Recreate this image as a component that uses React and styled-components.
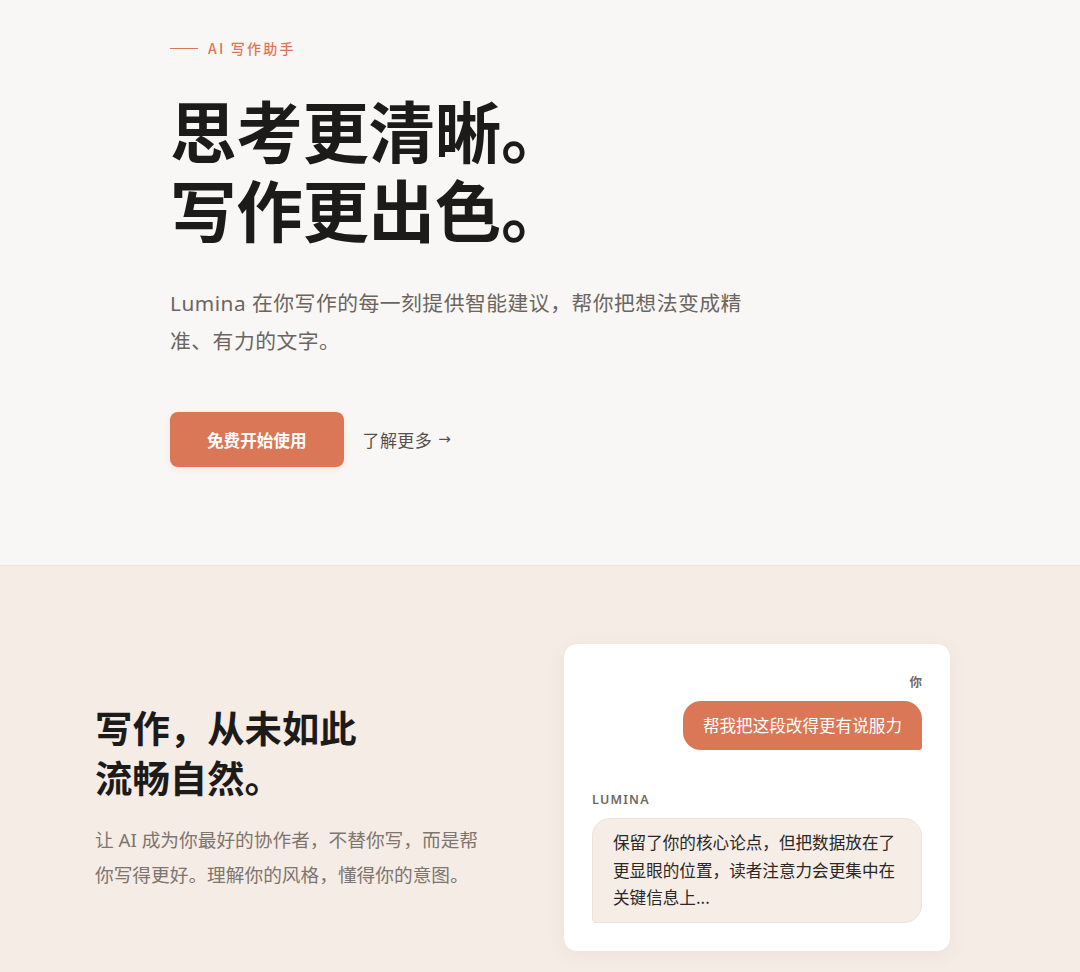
import styled, { createGlobalStyle } from "styled-components";

const GlobalStyle = createGlobalStyle`
  * { box-sizing: border-box; }
  body {
    margin: 0;
    background: #f9f7f5;
    font-family: "Noto Sans", "Noto Sans CJK SC", sans-serif;
    color: #1c1b1a;
  }
`;

export default function App() {
  return (
    <>
      <GlobalStyle />
      <Hero>
        <HeroInner>
          <Eyebrow>
            <EyebrowLine />
            AI 写作助手
          </Eyebrow>
          <Headline>
            思考更清晰。
            <br />
            写作更出色。
          </Headline>
          <Lead>
            Lumina 在你写作的每一刻提供智能建议，帮你把想法变成精准、有力的文字。
          </Lead>
          <Actions>
            <PrimaryButton>免费开始使用</PrimaryButton>
            <LinkButton>
              了解更多 <Arrow>→</Arrow>
            </LinkButton>
          </Actions>
        </HeroInner>
      </Hero>
      <Feature>
        <FeatureInner>
          <FeatureText>
            <FeatureTitle>
              写作，从未如此
              <br />
              流畅自然。
            </FeatureTitle>
            <FeatureBody>
              让 AI 成为你最好的协作者，不替你写，而是帮你写得更好。理解你的风格，懂得你的意图。
            </FeatureBody>
          </FeatureText>
          <ChatCard>
            <Speaker $align="right">你</Speaker>
            <Bubble $from="user">帮我把这段改得更有说服力</Bubble>
            <Speaker $caps>LUMINA</Speaker>
            <Bubble $from="ai">
              保留了你的核心论点，但把数据放在了更显眼的位置，读者注意力会更集中在关键信息上...
            </Bubble>
          </ChatCard>
        </FeatureInner>
      </Feature>
    </>
  );
}

const Hero = styled.section`
  background: #f9f7f5;
  border-bottom: 1px solid #efe6df;
  padding: 38px 0 98px;
`;

const HeroInner = styled.div`
  width: 740px;
  margin: 0 auto;
`;

const Eyebrow = styled.div`
  display: flex;
  align-items: center;
  gap: 10px;
  height: 20px;
  font-family: "Noto Sans CJK SC", sans-serif;
  font-size: 14px;
  font-weight: 500;
  letter-spacing: 2.2px;
  color: #d97757;
`;

const EyebrowLine = styled.span`
  display: block;
  width: 28px;
  height: 1px;
  background: #d97757;
`;

const Headline = styled.h1`
  margin: 32px 0 0;
  font-family: "Noto Sans CJK SC", sans-serif;
  font-size: 66.5px;
  font-weight: 700;
  line-height: 79px;
  letter-spacing: -0.3px;
  color: #1c1b1a;
`;

const Lead = styled.p`
  margin: 36px 0 0;
  max-width: 590px;
  font-family: "Noto Sans", "Noto Sans CJK SC", sans-serif;
  font-size: 20.8px;
  letter-spacing: 0.5px;
  line-height: 38px;
  color: #6b6560;
`;

const Actions = styled.div`
  display: flex;
  align-items: center;
  gap: 19px;
  margin-top: 52px;
`;

const PrimaryButton = styled.button`
  height: 55px;
  padding: 0 37px;
  border: 0;
  border-radius: 8px;
  background: #d97757;
  color: #fff;
  font-family: "Noto Sans CJK SC", sans-serif;
  font-size: 16.6px;
  font-weight: 700;
  box-shadow: 0 2px 6px rgba(217, 119, 87, 0.15);
  cursor: pointer;
`;

const LinkButton = styled.button`
  display: flex;
  align-items: center;
  gap: 6px;
  padding: 0;
  border: 0;
  background: none;
  color: #55504c;
  font-family: "Noto Sans CJK SC", sans-serif;
  font-size: 17px;
  font-weight: 400;
  letter-spacing: 0.4px;
  cursor: pointer;
`;

const Arrow = styled.span`
  font-family: "DejaVu Sans", sans-serif;
  font-size: 15px;
  line-height: 1;
  letter-spacing: 0;
`;

const Feature = styled.section`
  background: #f5ece5;
  padding: 77px 0 78px;
`;

const FeatureInner = styled.div`
  width: 890px;
  margin: 0 auto;
  display: grid;
  grid-template-columns: 422px 388px;
  column-gap: 46px;
  align-items: center;
`;

const FeatureText = styled.div`
  display: flex;
  flex-direction: column;
`;

const FeatureTitle = styled.h2`
  margin: 0;
  font-family: "Noto Sans CJK SC", sans-serif;
  font-size: 37.4px;
  font-weight: 700;
  line-height: 50px;
  color: #1c1b1a;
`;

const FeatureBody = styled.p`
  margin: 20px 0 0;
  max-width: 400px;
  font-family: "Noto Sans", "Noto Sans CJK SC", sans-serif;
  font-size: 18.7px;
  line-height: 35px;
  color: #7d756f;
`;

const ChatCard = styled.div`
  display: flex;
  flex-direction: column;
  background: #fff;
  border: 1px solid #efe8e2;
  border-radius: 14px;
  padding: 28px;
  box-shadow: 0 4px 18px rgba(120, 90, 60, 0.06);
`;

const Speaker = styled.div`
  align-self: ${(p) => (p.$align === "right" ? "flex-end" : "flex-start")};
  margin: ${(p) => (p.$caps ? "41px 0 9px" : "2px 0 9px")};
  font-family: "Noto Sans", "Noto Sans CJK SC", sans-serif;
  font-size: 12.5px;
  font-weight: 600;
  line-height: 18px;
  letter-spacing: ${(p) => (p.$caps ? "1.2px" : "0")};
  color: #6e6863;
`;

const Bubble = styled.div`
  font-family: "Noto Sans CJK SC", sans-serif;
  font-size: 16.6px;
  ${(p) =>
    p.$from === "user"
      ? `
    align-self: flex-end;
    padding: 12px 20px;
    line-height: 25px;
    background: #d97757;
    color: #fff;
    border-radius: 18px 18px 3px 18px;
  `
      : `
    align-self: stretch;
    padding: 10px 24px 10px 20px;
    line-height: 27.5px;
    background: #f5ede6;
    border: 1px solid #ece2da;
    color: #2a2725;
    border-radius: 18px 18px 18px 4px;
  `}
`;
